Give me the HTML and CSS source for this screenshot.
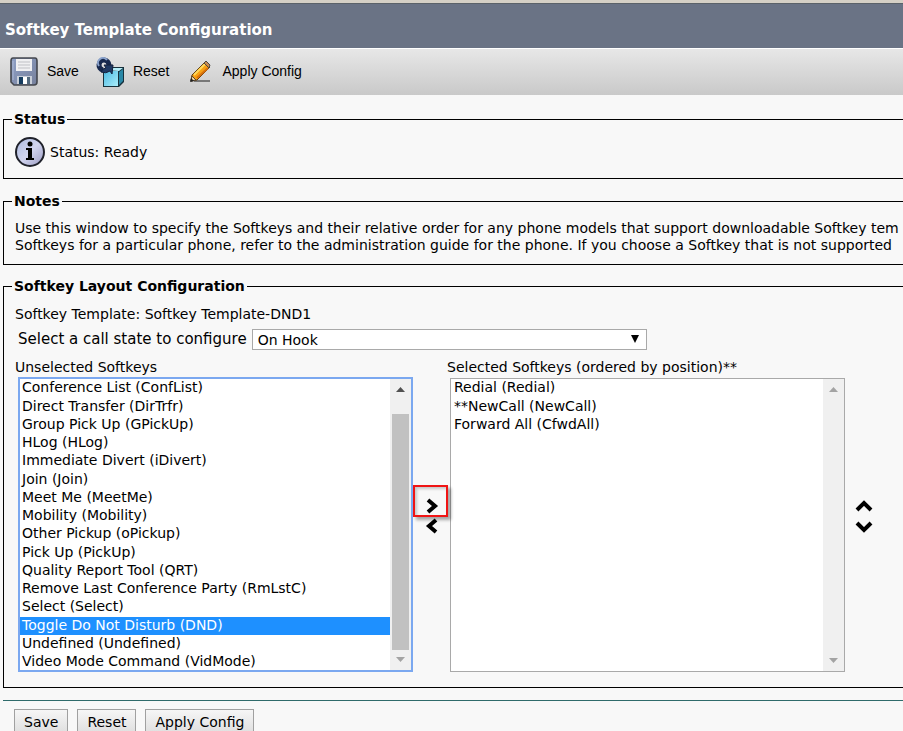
FILE: index.html
```html
<!DOCTYPE html>
<html lang="en">
<head>
<meta charset="utf-8">
<title>Softkey Template Configuration</title>
<link rel="stylesheet" href="styles.css">
</head>
<body>
<header class="title-bar"><h1>Softkey Template Configuration</h1></header>
<nav class="toolbar">
  <button type="button" class="tool">
    <svg width="30" height="30" viewBox="0 0 30 30" aria-hidden="true">
      <defs><linearGradient id="disk" x1="0" y1="0" x2="1" y2="1"><stop offset="0" stop-color="#8fa0c6"/><stop offset="1" stop-color="#76809c"/></linearGradient></defs>
      <path d="M4 1H26Q28 1 28 4V25Q28 28 25 28H5L2 25V4Q2 1 4 1Z" fill="url(#disk)" stroke="#45484f" stroke-width="1.600"/>
      <path d="M4 4V23" stroke="#acb8d5"/>
      <path d="M7 2H23V14H7Z" fill="#f0f0f2"/>
      <path d="M9 5H21M9 8H21M9 11H21" stroke="#bfc0c5"/>
      <path d="M8 19H23V27H8Z" fill="#c8ced8"/>
      <path d="M10 20H14V27H10Z" fill="#163d60"/><path d="M14 20H18V27H14Z" fill="#fff"/><path d="M18 20H21V27H18Z" fill="#52697e"/>
    </svg><span>Save</span></button>
  <button type="button" class="tool">
    <svg width="30" height="30" viewBox="0 0 30 30" aria-hidden="true">
      <defs><linearGradient id="cube" x1="0" y1="0" x2="1" y2="1"><stop offset="0" stop-color="#4ebbe3"/><stop offset="1" stop-color="#a9edfa"/></linearGradient></defs>
      <path d="M8 14L13 10H29V25L24 30H8Z" fill="#17313c"/>
      <path d="M9 14H23V29H9Z" fill="url(#cube)"/><path d="M10 13L14 11H28L24 14Z" fill="#b5eef9"/><path d="M24 15L28 12V24L24 28Z" fill="#2988a7"/>
      <path d="M8 13A5 5 0 1 1 14 8" fill="none" stroke="#18294e" stroke-width="5"/>
      <path d="M4 9A5 5 0 0 1 12 3" fill="none" stroke="#8ba3cc" stroke-width="2"/>
      <path d="M9 8H18L17 17L15 14Q11 17 6 15L8 12L11 11Z" fill="#203963" stroke="#14213d"/>
    </svg><span>Reset</span></button>
  <button type="button" class="tool tool-apply">
    <svg width="24" height="24" viewBox="0 0 24 24" aria-hidden="true">
      <path d="M5 21H21" stroke="#777" stroke-width="2"/>
      <path d="M2 21L3 15L15 3L21 7L8 20Z" fill="#f7a014" stroke="#5b3a14"/>
      <path d="M5 15L16 4" stroke="#ffd95c" stroke-width="2"/>
      <path d="M8 18L19 8" stroke="#d8700c" stroke-width="2"/>
      <path d="M15 3L17 1L21 5L20 8Z" fill="#c58a55" stroke="#4e4941"/>
      <path d="M2 21L3 16L7 20Z" fill="#f6d8a4" stroke="#54442d"/><path d="M1 22L2 18L5 21Z" fill="#222"/>
    </svg><span>Apply Config</span></button>
</nav>
<main class="content">
  <fieldset class="panel status">
    <legend>Status</legend>
    <div class="status-line">
      <svg width="32" height="32" viewBox="0 0 32 32" aria-hidden="true">
        <defs><linearGradient id="info" x1="0" y1="0" x2="1" y2="1"><stop offset="0" stop-color="#a9b9df"/><stop offset=".5" stop-color="#d2d5ef"/><stop offset="1" stop-color="#9999c0"/></linearGradient></defs>
        <circle cx="16" cy="16" r="14" fill="url(#info)" stroke="#20222b" stroke-width="2"/>
        <circle cx="16" cy="8" r="2.500"/><path d="M12 12H18V22H20V24H12V22H14V14H12Z"/>
      </svg><span>Status: Ready</span>
    </div>
  </fieldset>
  <fieldset class="panel notes">
    <legend>Notes</legend>
    <p>Use this window to specify the Softkeys and their relative order for any phone models that support downloadable Softkey tem<br>Softkeys for a particular phone, refer to the administration guide for the phone. If you choose a Softkey that is not supported</p>
  </fieldset>
  <fieldset class="panel layout">
    <legend>Softkey Layout Configuration</legend>
    <p>Softkey Template: Softkey Template-DND1</p>
    <div class="state-row">
      <label for="state">Select a call state to configure</label>
      <span class="dropdown"><select id="state"><option>On Hook</option></select>
        <svg width="8" height="8" viewBox="0 0 8 8" aria-hidden="true"><path d="M0 0H8L4 8Z"/></svg></span>
    </div>
    <div class="lists">
      <div class="list-col">
        <label for="unselected">Unselected Softkeys</label>
        <div class="listbox focused">
          <select id="unselected" multiple size="16">
            <option>Conference List (ConfList)</option><option>Direct Transfer (DirTrfr)</option><option>Group Pick Up (GPickUp)</option><option>HLog (HLog)</option><option>Immediate Divert (iDivert)</option><option>Join (Join)</option><option>Meet Me (MeetMe)</option><option>Mobility (Mobility)</option><option>Other Pickup (oPickup)</option><option>Pick Up (PickUp)</option><option>Quality Report Tool (QRT)</option><option>Remove Last Conference Party (RmLstC)</option><option>Select (Select)</option><option class="current">Toggle Do Not Disturb (DND)</option><option>Undefined (Undefined)</option><option>Video Mode Command (VidMode)</option>
          </select>
          <div class="scrollbar" aria-hidden="true">
            <svg width="9" height="5" viewBox="0 0 9 5"><path d="M0 5L4.500 0L9 5Z" fill="#505050"/></svg>
            <span class="thumb"></span>
            <svg width="9" height="5" viewBox="0 0 9 5"><path d="M0 0H9L4.500 5Z" fill="#a3a3a3"/></svg>
          </div>
        </div>
      </div>
      <div class="movers">
        <button type="button" aria-label="Add"><svg width="14" height="16" viewBox="0 0 14 16"><path d="M3 2L10 8L3 14" /></svg><span class="highlight"></span></button>
        <button type="button" aria-label="Remove"><svg width="14" height="16" viewBox="0 0 14 16"><path d="M11 2L4 8L11 14"/></svg></button>
      </div>
      <div class="list-col">
        <label for="selected">Selected Softkeys (ordered by position)**</label>
        <div class="listbox plain">
          <select id="selected" multiple size="16">
            <option>Redial (Redial)</option><option>**NewCall (NewCall)</option><option>Forward All (CfwdAll)</option>
          </select>
          <div class="scrollbar" aria-hidden="true">
            <svg width="9" height="5" viewBox="0 0 9 5"><path d="M0 5L4.500 0L9 5Z" fill="#a3a3a3"/></svg>
            <svg width="9" height="5" viewBox="0 0 9 5"><path d="M0 0H9L4.500 5Z" fill="#a3a3a3"/></svg>
          </div>
        </div>
      </div>
      <div class="movers order">
        <button type="button" aria-label="Move up"><svg width="18" height="14" viewBox="0 0 18 14"><path d="M2 11L9 4L16 11"/></svg></button>
        <button type="button" aria-label="Move down"><svg width="18" height="14" viewBox="0 0 18 14"><path d="M2 3L9 10L16 3"/></svg></button>
      </div>
    </div>
  </fieldset>
  <div class="actions">
    <button type="button">Save</button><button type="button">Reset</button><button type="button">Apply Config</button>
  </div>
</main>
</body>
</html>
```
FILE: styles.css
```css
* { box-sizing: border-box; }
html { overflow: hidden; }
body {
  margin: 0;
  background: #f8f8f8;
  color: #000;
  font: 14px/17px "DejaVu Sans", sans-serif;
  border-top: 3px solid #d5d0c6;
}
p { margin: 0; }
button, select { font: inherit; color: inherit; }

.title-bar {
  height: 45px;
  padding: 17px 5px 0;
  background: #6a7385;
  border-top: 1px solid #5b6269;
  color: #fff;
}
.title-bar h1 { margin: 0; font-size: 15px; line-height: 18px; }

.toolbar {
  display: flex;
  align-items: center;
  height: 47px;
  padding-left: 9px;
  gap: 16px;
  background: linear-gradient(#e7e7e7, #c9c9c9);
  border-top: 1px solid #fff;
}
.tool {
  display: flex;
  align-items: center;
  gap: 8px;
  padding: 0;
  border: 0;
  background: none;
  font: 14px/17px "Liberation Sans", Arial, sans-serif;
}
.tool span { padding-bottom: 2px; }
.tool-apply { gap: 10px; margin-left: 3px; }

.content { margin-left: 3px; margin-right: -40px; padding-top: 16px; }
.panel {
  min-width: 0;
  margin: 0 0 13px;
  padding: 0 0 0 11px;
  border: 1px solid #000;
  white-space: nowrap;
}
.panel legend {
  margin-left: -3px;
  padding: 0 2px;
  font-weight: bold;
  line-height: 17px;
}
.status { margin-bottom: 14px; }
.status-line { display: flex; align-items: center; gap: 4px; padding: 8px 0 10px; margin-left: -1px; }
.notes p { padding: 10px 0; }
.layout { padding-bottom: 15px; margin-bottom: 12px; }
.layout > p { padding-top: 11px; }

.state-row { display: flex; align-items: center; gap: 5px; margin: 6px 0 9px 3px; font-size: 15px; }
.dropdown { position: relative; width: 395px; }
.dropdown select {
  display: block;
  appearance: none;
  width: 100%;
  height: 21px;
  padding: 1px 5px 0;
  border: 1px solid #a9a9a9;
  border-radius: 0;
  background: #fff;
  font-size: 14px;
}
.dropdown svg { position: absolute; right: 8px; top: 6px; pointer-events: none; }

.lists { display: flex; }
.list-col label { display: block; margin-bottom: 1px; }
.listbox { display: flex; width: 395px; height: 295px; margin-left: 3px; background: #fff; border: 1px solid #a9a9a9; }
.listbox.focused { border: 2px solid #7ba8f0; }
.listbox.plain { height: 294px; margin-top: 2px; }
.listbox.plain option { padding: 0 3px; }
.listbox select {
  flex: 1;
  min-width: 0;
  height: 100%;
  padding: 0;
  border: 0;
  border-radius: 0;
  outline: 0;
  background: #fff;
  overflow: hidden;
}
.listbox option { min-height: 18px; padding: 0 2px; line-height: 18px; }
.listbox option:nth-child(4n+1) { min-height: 19px; }
.listbox option.current { background: #1e90ff; color: #fff; }
.scrollbar {
  display: flex;
  flex-direction: column;
  align-items: center;
  justify-content: space-between;
  width: 21px;
  padding: 8px 0;
  background: #f0f0f0;
}
.thumb { flex: 1; width: 17px; margin: 22px 0 7px; background: #c1c1c1; }

.movers { display: flex; flex-direction: column; gap: 4px; width: 34px; padding: 139px 0 0 4px; align-items: center; }
.movers button { position: relative; display: block; padding: 0; border: 0; background: none; line-height: 0; }
.movers path { fill: none; stroke: #000; stroke-width: 4; }
.movers .highlight {
  position: absolute;
  left: -12px;
  top: -13px;
  width: 35px;
  height: 32px;
  border: 2px solid #f01414;
  box-shadow: 3px 3px 3px #0005, inset 2px 2px 3px #0003;
}
.movers.order { width: 36px; gap: 7px; padding: 140px 0 0 1px; }

.actions { display: flex; gap: 9px; padding: 8px 11px; border-top: 1px solid #2f6b6b; }
.actions button {
  height: 26px;
  padding: 0 9px;
  border: 1px solid #a0a0a0;
  border-radius: 0;
  background: linear-gradient(#f6f6f6, #dedede);
}
```
